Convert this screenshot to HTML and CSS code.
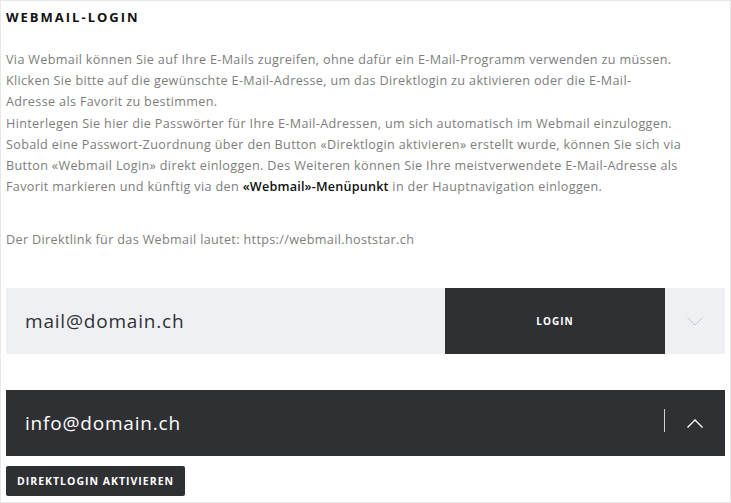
FILE: index.html
```html
<!DOCTYPE html>
<html lang="de">
<head>
    <meta charset="UTF-8">
    <meta name="viewport" content="width=device-width, initial-scale=1.0">
    <title>Webmail-Login</title>
    <link rel="stylesheet" href="styles.css">
</head>
<body>

    <div class="panel">
        <h1 class="title">Webmail-Login</h1>

        <p class="intro">Via Webmail können Sie auf Ihre E-Mails zugreifen, ohne dafür ein E-Mail-Programm verwenden zu müssen.<br>
        Klicken Sie bitte auf die gewünschte E-Mail-Adresse, um das Direktlogin zu aktivieren oder die E-Mail-<br>
        Adresse als Favorit zu bestimmen.</p>
        <p class="intro">Hinterlegen Sie hier die Passwörter für Ihre E-Mail-Adressen, um sich automatisch im Webmail einzuloggen.<br>
        Sobald eine Passwort-Zuordnung über den Button «Direktlogin aktivieren» erstellt wurde, können Sie sich via<br>
        Button «Webmail Login» direkt einloggen. Des Weiteren können Sie Ihre meistverwendete E-Mail-Adresse als<br>
        Favorit markieren und künftig via den <strong>«Webmail»-Menüpunkt</strong> in der Hauptnavigation einloggen.</p>

        <p class="intro link">Der Direktlink für das Webmail lautet: https://webmail.hoststar.ch</p>

        <div class="mailbox">
            <div class="address">mail@domain.ch</div>
            <button class="login">Login</button>
            <div class="toggle">
                <svg width="16" height="9" viewBox="0 0 16 9"><path d="M0.5 0.5 L8 8 L15.5 0.5" fill="none" stroke="#c4c5cb" stroke-width="1"/></svg>
            </div>
        </div>

        <div class="mailbox open">
            <div class="address">info@domain.ch</div>
            <div class="toggle">
                <svg width="16" height="9" viewBox="0 0 16 9"><path d="M0.5 8.5 L8 1 L15.5 8.5" fill="none" stroke="#ffffff" stroke-width="1.3"/></svg>
            </div>
        </div>

        <button class="activate">Direktlogin aktivieren</button>
    </div>

</body>
</html>
```

FILE: styles.css
```css
body {
    margin: 0;
    font-family: "Open Sans", Arial, sans-serif;
    background-color: #fff;
}
.panel {
    box-sizing: border-box;
    width: 731px;
    height: 503px;
    border: 1px solid #e8e8e8;
    padding: 6px 5px 0 4px;
}
.title {
    margin: 0 0 22px 1px;
    font-size: 13px;
    line-height: 20px;
    font-weight: 700;
    letter-spacing: 2px;
    text-transform: uppercase;
    color: #111;
}
.intro {
    margin: 0 0 1px 1px;
    font-size: 12.6px;
    line-height: 21px;
    letter-spacing: 0.35px;
    white-space: nowrap;
    color: #7d7d7d;
}
.intro strong {
    color: #111;
    font-weight: 600;
    letter-spacing: 0.2px;
}
.intro.link {
    margin-top: 32px;
    margin-bottom: 38px;
}
.mailbox {
    display: flex;
    align-items: stretch;
    height: 66px;
    margin-left: 1px;
    background-color: #eff0f4;
}
.address {
    flex: 1;
    display: flex;
    align-items: center;
    padding-left: 19px;
    font-size: 19px;
    letter-spacing: 0.8px;
    color: #303135;
}
.login {
    width: 220px;
    border: 0;
    background-color: #2f3034;
    color: #fff;
    font-family: inherit;
    font-size: 10px;
    font-weight: 700;
    letter-spacing: 1px;
    text-transform: uppercase;
}
.toggle {
    width: 60px;
    display: flex;
    align-items: center;
    justify-content: center;
}
.mailbox.open {
    margin-top: 36px;
    background-color: #2f3034;
}
.mailbox.open .address {
    color: #fff;
}
.mailbox.open .toggle {
    position: relative;
}
.mailbox.open .toggle::before {
    content: "";
    position: absolute;
    left: -1px;
    top: 19px;
    width: 1px;
    height: 23px;
    background-color: #d0d0d0;
}
.activate {
    margin: 10px 0 0 1px;
    height: 30px;
    padding: 0 11px;
    border: 0;
    border-radius: 2px;
    background-color: #2f3034;
    color: #fff;
    font-family: inherit;
    font-size: 10.5px;
    font-weight: 700;
    letter-spacing: 1px;
    text-transform: uppercase;
}
```
